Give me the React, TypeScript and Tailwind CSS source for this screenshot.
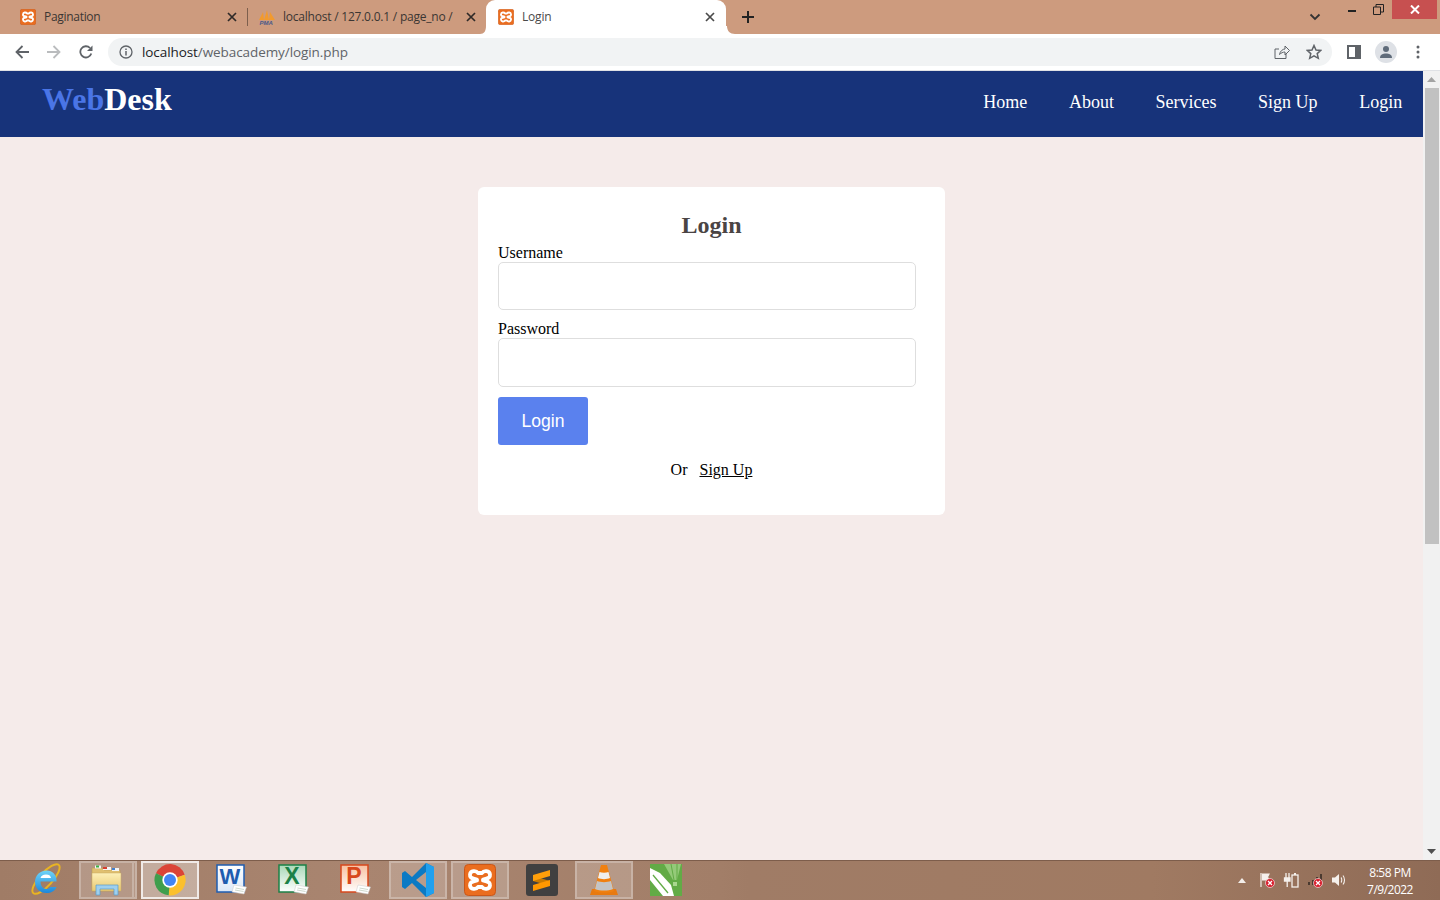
import React from "react";

const Xampp = ({ s = 16 }: { s?: number }) => (
  <svg width={s} height={s} viewBox="0 0 32 32">
    <rect x="0.5" y="0.5" width="31" height="31" rx="4" fill="#ea6d1f" stroke="#c9571a" />
    <path d="M14 9C12 6 6.500 6.500 6 10.500C5.700 13 7.500 14.500 9.500 14.500L13 15.500L13 16.500L9.500 17.500C7.500 17.500 5.700 19 6 21.500C6.500 25.500 12 26 14 23L18 23C20 26 25.500 25.500 26 21.500C26.300 19 24.500 17.500 22.500 17.500L19 16.500L19 15.500L22.500 14.500C24.500 14.500 26.300 13 26 10.500C25.500 6.500 20 6 18 9Z" fill="none" stroke="#fff" strokeWidth="3.800" strokeLinejoin="round" />
  </svg>
);

const Close = ({ c = "#2f2a28" }: { c?: string }) => (
  <svg width="10" height="10" viewBox="0 0 10 10" className="shrink-0">
    <path d="M1 1L9 9M9 1L1 9" stroke={c} strokeWidth="1.700" />
  </svg>
);

const Pma = () => (
  <svg width="18" height="16" viewBox="0 0 18 16" className="shrink-0">
    <path d="M1 11L5 3L6 11ZM6 11L9 1L11 11ZM11 11L12 3L17 11Z" fill="#f29a2e" />
    <text x="1.500" y="15.500" fontSize="6" fontWeight="700" fontStyle="italic" fill="#4a5a8a" fontFamily="Liberation Sans, sans-serif">PMA</text>
  </svg>
);

const Tabs = () => (
  <div className="relative flex h-[34px] items-start bg-[#cd9b7e] pl-[8px] text-[12px] text-[#3b3633]">
    <div className="flex h-[34px] w-[239px] items-center pl-[12px] pr-[10px]">
      <Xampp />
      <span className="ml-[8px] flex-1 tracking-[-0.3px] font-['Open_Sans',sans-serif]">Pagination</span>
      <Close />
    </div>
    <div className="mt-[8px] h-[18px] w-px bg-[#7d5f4d]" />
    <div className="flex h-[34px] w-[238px] items-center pl-[10px] pr-[10px]">
      <Pma />
      <span className="ml-[7px] w-[172px] whitespace-nowrap tracking-[-0.22px] font-['Open_Sans',sans-serif]">localhost / 127.0.0.1 / page_no /</span>
      <span className="ml-auto"><Close /></span>
    </div>
    <div className="relative z-10 flex h-[38px] w-[240px] items-start rounded-t-[9px] bg-white pl-[12px] pr-[11px] pt-[9px] text-[#4a4a4a]">
      <svg width="8" height="8" viewBox="0 0 8 8" className="absolute bottom-[4px] left-[-6px]"><path d="M8 0V8H0C4 8 6 5 6 0Z" fill="#fff" /></svg>
      <svg width="9" height="8" viewBox="0 0 9 8" className="absolute bottom-[4px] right-[-9px]"><path d="M0 0V8H9C4 8 1 5 1 0Z" fill="#fff" /></svg>
      <Xampp />
      <span className="ml-[8px] flex-1 leading-[16px] tracking-[-0.2px] font-['Open_Sans',sans-serif]">Login</span>
      <span className="mt-[3px]"><Close c="#4a4a4a" /></span>
    </div>
    <svg width="12" height="12" viewBox="0 0 12 12" className="ml-[16px] mt-[11px]"><path d="M6 0V12M0 6H12" stroke="#222" strokeWidth="2" /></svg>
    <div className="ml-auto flex h-[19px] items-start">
      <svg width="12" height="8" viewBox="0 0 12 8" className="mr-[27px] mt-[13px]"><path d="M1.500 1.500L6 6L10.500 1.500" fill="none" stroke="#333" strokeWidth="1.800" /></svg>
      <div className="mr-[17px] mt-[10px] h-[2px] w-[8px] bg-[#222]" />
      <svg width="11" height="11" viewBox="0 0 11 11" className="mr-[8px] mt-[4px]"><path d="M.5 3H7.500V10.500H.5ZM3 3V.5H10.500V8H7.500" fill="none" stroke="#222" /></svg>
      <div className="mr-[3px] flex h-[19px] w-[45px] items-center justify-center bg-[#c75050]">
        <svg width="10" height="9" viewBox="0 0 10 9"><path d="M1 .5L9 8.500M9 .5L1 8.500" stroke="#fff" strokeWidth="2" /></svg>
      </div>
    </div>
  </div>
);

const Toolbar = () => (
  <div className="flex h-[37px] items-center border-b border-[#dfe1e5] bg-white py-[4px]">
    <div className="flex w-[108px] items-center pl-[15px]">
      <svg width="14" height="14" viewBox="0 0 14 14"><path d="M14 7H2M7.500 1L1.500 7L7.500 13" fill="none" stroke="#5f6368" strokeWidth="1.800" /></svg>
      <svg width="14" height="14" viewBox="0 0 14 14" className="ml-[18px]"><path d="M0 7H12M6.500 1L12.500 7L6.500 13" fill="none" stroke="#babcbe" strokeWidth="1.800" /></svg>
      <svg width="14" height="14" viewBox="0 0 14 14" className="ml-[18px]"><path d="M12.300 8.500A5.600 5.600 0 1 1 11 3" fill="none" stroke="#5f6368" strokeWidth="1.800" /><path d="M13.500 0.500V6H8Z" fill="#5f6368" /></svg>
    </div>
    <div className="flex h-[28px] w-[1224px] items-center rounded-full bg-[#f1f3f4] pl-[11px] pr-[10px]">
      <svg width="14" height="14" viewBox="0 0 14 14" className="shrink-0"><circle cx="7" cy="7" r="6" fill="none" stroke="#5f6368" strokeWidth="1.300" /><path d="M7 6V10.500M7 3.500V5" stroke="#5f6368" strokeWidth="1.500" /></svg>
      <span className="ml-[9px] text-[13.500px] tracking-[-0.08px] text-[#5f6368] font-['Open_Sans',sans-serif]"><span className="text-[#202124]">localhost</span>/webacademy/login.php</span>
      <svg width="16" height="16" viewBox="0 0 16 16" className="ml-auto"><path d="M12 9.500V14.500H1V5H5M5.500 10.500C6 7 9 5 11 5V2L15.500 6.500L11 11V8C9 8 7 9 5.500 10.500Z" fill="none" stroke="#5f6368" strokeWidth="1" /></svg>
      <svg width="16" height="16" viewBox="0 0 16 16" className="ml-[16px]"><path d="M8 1.500L10 6L14.800 6.400L11.200 9.600L12.300 14.300L8 11.800L3.700 14.300L4.800 9.600L1.200 6.400L6 6Z" fill="none" stroke="#5f6368" strokeWidth="1.500" /></svg>
    </div>
    <svg width="14" height="14" viewBox="0 0 14 14" className="ml-[15px]"><rect x="1" y="1" width="12" height="12" fill="none" stroke="#5f6368" strokeWidth="2" /><rect x="8" y="1" width="5" height="12" fill="#5f6368" /></svg>
    <div className="ml-[14px] flex h-[22px] w-[22px] items-center justify-center rounded-full bg-[#dee1e6]">
      <svg width="14" height="14" viewBox="0 0 14 14"><circle cx="7" cy="4" r="3" fill="#5f6b7a" /><path d="M1 13C1 9.500 4 8.500 7 8.500C10 8.500 13 9.500 13 13Z" fill="#5f6b7a" /></svg>
    </div>
    <svg width="4" height="14" viewBox="0 0 4 14" className="ml-[19px]"><circle cx="2" cy="2" r="1.500" fill="#5f6368" /><circle cx="2" cy="7" r="1.500" fill="#5f6368" /><circle cx="2" cy="12" r="1.500" fill="#5f6368" /></svg>
  </div>
);

const Site = () => (
  <div className="min-w-0 flex-1 bg-[#f5ebea] font-['Liberation_Serif',serif] text-black">
    <nav className="flex h-[66px] items-start justify-between bg-[#17337a] pl-[42px]">
      <a className="mt-[10px] text-[32px] font-bold leading-[36px] text-white"><span className="text-[#4a75e6]">Web</span>Desk</a>
      <ul className="mt-[21px] flex text-[18px] leading-[20px] text-white">
        <li className="px-[20.800px]">Home</li>
        <li className="px-[20.800px]">About</li>
        <li className="px-[20.800px]">Services</li>
        <li className="px-[20.800px]">Sign Up</li>
        <li className="px-[20.800px]">Login</li>
      </ul>
    </nav>
    <form className="mx-auto mt-[50px] h-[328px] w-[467px] rounded-[6px] bg-white pl-[20px] pt-[24px]">
      <h2 className="mb-[5px] -ml-[20px] text-center text-[24px] font-bold leading-[28px] text-[#4a4444]">Login</h2>
      <label className="block text-[16px] leading-[18px]">Username</label>
      <input type="text" className="block h-[48px] w-[418px] rounded-[5px] border border-[#dedede] bg-white" />
      <label className="mt-[10px] block text-[16px] leading-[18px]">Password</label>
      <input type="password" className="block h-[49px] w-[418px] rounded-[5px] border border-[#dedede] bg-white" />
      <button type="button" className="mt-[10px] block h-[48px] w-[90px] rounded-[3px] bg-[#5a81ee] text-[17.600px] text-white font-['Liberation_Sans',sans-serif]">Login</button>
      <p className="-ml-[20px] mt-[16px] text-center text-[16px] leading-[18px]">Or <a className="ml-[8px] underline">Sign Up</a></p>
    </form>
  </div>
);

const Scrollbar = () => (
  <div className="flex w-[17px] flex-col items-center bg-[#f1f1f1]">
    <div className="flex h-[17px] items-center justify-center">
      <svg width="9" height="5" viewBox="0 0 9 5"><path d="M4.500 0L9 5H0Z" fill="#a3a3a3" /></svg>
    </div>
    <div className="h-[456px] w-[14px] bg-[#c1c1c1]" />
    <div className="mt-auto flex h-[17px] items-center justify-center">
      <svg width="9" height="5" viewBox="0 0 9 5"><path d="M0 0H9L4.500 5Z" fill="#505050" /></svg>
    </div>
  </div>
);

const IE = () => (
  <svg width="32" height="34" viewBox="0 0 32 34">
    <defs>
      <linearGradient id="ieg" x1="0" y1="0" x2="0" y2="1">
        <stop offset="0" stopColor="#6fd3f7" />
        <stop offset="1" stopColor="#1c88dc" />
      </linearGradient>
    </defs>
    <ellipse cx="16" cy="16" rx="19" ry="6.500" transform="rotate(-48 16 16)" fill="none" stroke="#e9b422" strokeWidth="2" />
    <path d="M8 18.500H26.500C27 12 22.500 7.500 16.500 7.500C10 7.500 5 12.500 5 19C5 25.500 10 30 16.500 30C21 30 25 28 26.500 24H20.500C19.500 25.500 18 26 16.500 26C13 26 10.500 23 10.500 18.500Z" fill="url(#ieg)" />
    <path d="M10.500 15H21C20.500 12.500 19 11.500 16 11.500C13 11.500 11 13 10.500 15Z" fill="#fff" />
  </svg>
);
const Folder = () => (
  <svg width="32" height="32" viewBox="0 0 32 32">
    <defs>
      <linearGradient id="fog" x1="0" y1="0" x2="0" y2="1">
        <stop offset="0" stopColor="#fdf0b8" />
        <stop offset="1" stopColor="#e8c870" />
      </linearGradient>
    </defs>
    <path d="M1 4H11L13 6H29V27H1Z" fill="#e0c070" stroke="#b89a58" strokeWidth=".6" />
    <rect x="4" y="1.500" width="6" height="3" fill="#f4f4f4" />
    <rect x="5" y="1.500" width="3" height="2" fill="#3cb043" />
    <rect x="12" y="3" width="8" height="3" fill="#f4f4f4" />
    <rect x="12" y="3" width="4" height="2" fill="#d84030" />
    <rect x="21" y="4" width="7" height="3" fill="#f4f4f4" />
    <rect x="21" y="4" width="3" height="2" fill="#4080d0" />
    <path d="M1 9H30V27H1Z" fill="url(#fog)" stroke="#c8a860" strokeWidth=".5" />
    <path d="M5 21H27V31H23V25H9V31H5Z" fill="#9fd0ee" stroke="#5a9cc8" strokeWidth=".7" />
  </svg>
);
const Chrome = () => (
  <svg width="32" height="32" viewBox="0 0 48 48">
    <path d="M24 24L3 14A23 23 0 0 1 46 16Z" fill="#db4437" />
    <path d="M24 24L46 16A23 23 0 0 1 22 47Z" fill="#fbc02d" />
    <path d="M24 24L22 47A23 23 0 0 1 3 14Z" fill="#3f9e4d" />
    <circle cx="24" cy="24" r="11.500" fill="#fff" />
    <circle cx="24" cy="24" r="9" fill="#4285f4" />
  </svg>
);
const Office = ({ id, c, top, bg, l }: { id: string; c: string; top: string; bg: string; l: string }) => (
  <svg width="32" height="32" viewBox="0 0 32 32">
    <defs>
      <linearGradient id={id} x1="0" y1="0" x2="0" y2="1">
        <stop offset="0" stopColor={top} />
        <stop offset="1" stopColor={bg} />
      </linearGradient>
    </defs>
    <rect x="1" y="1" width="27" height="27" fill={`url(#${id})`} stroke={c} strokeWidth="1.500" />
    <text x="14" y="20" textAnchor="middle" fontSize={l === "W" ? 22 : 23} fontWeight="700" fill={c} fontFamily="Liberation Sans, sans-serif">{l}</text>
    <path d="M18 21L30.500 23L28 30L16 28Z" fill="#fff" stroke="#c8c8c8" strokeWidth=".5" />
    <path d="M19.500 24L28 25.500M19 26L27.500 27.500" stroke="#b8c8b8" strokeWidth=".7" />
  </svg>
);
const VS = () => (
  <svg width="32" height="36" viewBox="0 0 32 36">
    <path d="M24 1L32 5V31L24 35L10 21L3 27L0 25V11L3 9L10 15ZM24 10L14 18L24 26Z" fill="#0b7ac4" />
    <path d="M24 1L32 5V31L24 35Z" fill="#20a0ee" />
  </svg>
);
const Sublime = () => (
  <svg width="32" height="32" viewBox="0 0 32 32">
    <rect width="32" height="32" rx="3" fill="#404040" />
    <path d="M7 12L24 17V22L7 17Z" fill="#c97a00" />
    <path d="M7 11L24 6V12L7 17Z" fill="#ff9f0a" />
    <path d="M7 21L24 16V22L7 27Z" fill="#ff9800" />
  </svg>
);
const VLC = () => (
  <svg width="28" height="32" viewBox="0 0 28 32">
    <path d="M2 25H26L28 31H0Z" fill="#e87a10" />
    <path d="M11 1H17L24 27C20 29 8 29 4 27Z" fill="#f08010" />
    <path d="M9.500 8C12 9 16 9 18.500 8L20 14C17 15.500 11 15.500 8 14Z" fill="#efefef" />
    <path d="M7 17C11 18.500 17 18.500 21 17L23 25C18 27 10 27 5 25Z" fill="#c4c4c4" />
  </svg>
);
const Corel = () => (
  <svg width="32" height="32" viewBox="0 0 32 32">
    <rect width="32" height="32" fill="#62ab46" />
    <path d="M14 0L23 16H27L31 0" fill="#a9d78f" opacity=".7" />
    <path d="M21 0L24 16M27 16L27 0" stroke="#62ab46" strokeWidth="1" />
    <rect x="23" y="18" width="4" height="4" fill="#a9d78f" />
    <path d="M0 4L10 9L21 21L24 32H13L0 16Z" fill="#fff" />
    <path d="M3 11L18 29" stroke="#62ab46" strokeWidth="1.300" />
  </svg>
);

const Slot = ({ state, stack, children }: { state?: "on" | "active"; stack?: boolean; children: React.ReactNode }) => (
  <div className="flex h-[40px] w-[62px] items-center justify-center">
    <div
      className={
        "flex h-[38px] w-[58px] items-center justify-center " +
        (state === "active"
          ? "border-2 border-white/75 bg-white/35"
          : state === "on"
            ? "border-2 border-white/25 bg-white/20"
            : "")
      }
    >
      <div className="flex flex-1 items-center justify-center">{children}</div>
      {stack && <div className="h-full w-[3px] border-l-2 border-white/25" />}
    </div>
  </div>
);

const Tray = () => (
  <div className="ml-auto flex h-[40px] items-center text-white">
    <svg width="8" height="5" viewBox="0 0 8 5"><path d="M4 0L8 5H0Z" fill="#f3eeea" /></svg>
    <svg width="16" height="16" viewBox="0 0 16 16" className="ml-[13px]">
      <path d="M2 1V15M3 2H10L8.500 5L10 8H3" fill="#f5f0ec" stroke="#f5f0ec" strokeWidth="1.200" />
      <circle cx="11" cy="11" r="4.500" fill="#d81e2c" stroke="#fff" strokeWidth=".6" />
      <path d="M9 9L13 13M13 9L9 13" stroke="#fff" strokeWidth="1.300" />
    </svg>
    <svg width="16" height="16" viewBox="0 0 16 16" className="ml-[8px]">
      <path d="M3 1V6M6 1V6M1.500 6H7V9H1.500ZM4.200 9V15" stroke="#f5f0ec" strokeWidth="1.300" fill="#f5f0ec" />
      <rect x="9" y="3" width="6" height="12" fill="none" stroke="#f5f0ec" strokeWidth="1.300" />
      <rect x="11" y="1" width="2" height="2" fill="#f5f0ec" />
    </svg>
    <svg width="16" height="16" viewBox="0 0 16 16" className="ml-[8px]">
      <path d="M1 10H3V13H1ZM5 8H7V13H5ZM9 5H11V9H9ZM13 2H15V8H13Z" fill="#4a3a30" />
      <circle cx="11" cy="11" r="4.500" fill="#d81e2c" stroke="#fff" strokeWidth=".6" />
      <path d="M9 9L13 13M13 9L9 13" stroke="#fff" strokeWidth="1.300" />
    </svg>
    <svg width="16" height="16" viewBox="0 0 16 16" className="ml-[8px]">
      <path d="M1 5.500H4L8 2V14L4 10.500H1Z" fill="#f5f0ec" />
      <path d="M10 5.500C11 6.500 11 9.500 10 10.500M12 3.500C14 6 14 10 12 12.500" fill="none" stroke="#f5f0ec" strokeWidth="1.100" />
    </svg>
    <div className="ml-[15px] mr-[22px] flex w-[56px] flex-col items-center pt-[2px] text-[12px] leading-[17px] tracking-[-0.5px] font-['Open_Sans',sans-serif]">
      <span>8:58 PM</span>
      <span>7/9/2022</span>
    </div>
  </div>
);

const Taskbar = () => (
  <div className="flex h-[40px] items-center bg-[linear-gradient(90deg,#a07c66_0%,#a98570_25%,#a27e68_50%,#a07c66_52%,#a07a62_80%,#8f6b56_100%)] pl-[15px] shadow-[inset_0_1px_0_#7d5d4b]">
    <Slot><IE /></Slot>
    <Slot state="on" stack><Folder /></Slot>
    <Slot state="active"><Chrome /></Slot>
    <Slot><Office id="wg" c="#1f5db0" top="#ffffff" bg="#dbe8f8" l="W" /></Slot>
    <Slot><Office id="xg" c="#1c8147" top="#a9d8b8" bg="#ffffff" l="X" /></Slot>
    <Slot><Office id="pg" c="#d8481c" top="#f8c0a0" bg="#ffffff" l="P" /></Slot>
    <Slot state="on"><VS /></Slot>
    <Slot state="on"><Xampp s={32} /></Slot>
    <Slot><Sublime /></Slot>
    <Slot state="on"><VLC /></Slot>
    <Slot><Corel /></Slot>
    <Tray />
  </div>
);

export default function App() {
  return (
    <div className="flex h-[900px] w-[1440px] flex-col overflow-hidden">
      <Tabs />
      <Toolbar />
      <div className="flex min-h-0 flex-1">
        <Site />
        <Scrollbar />
      </div>
      <Taskbar />
    </div>
  );
}
